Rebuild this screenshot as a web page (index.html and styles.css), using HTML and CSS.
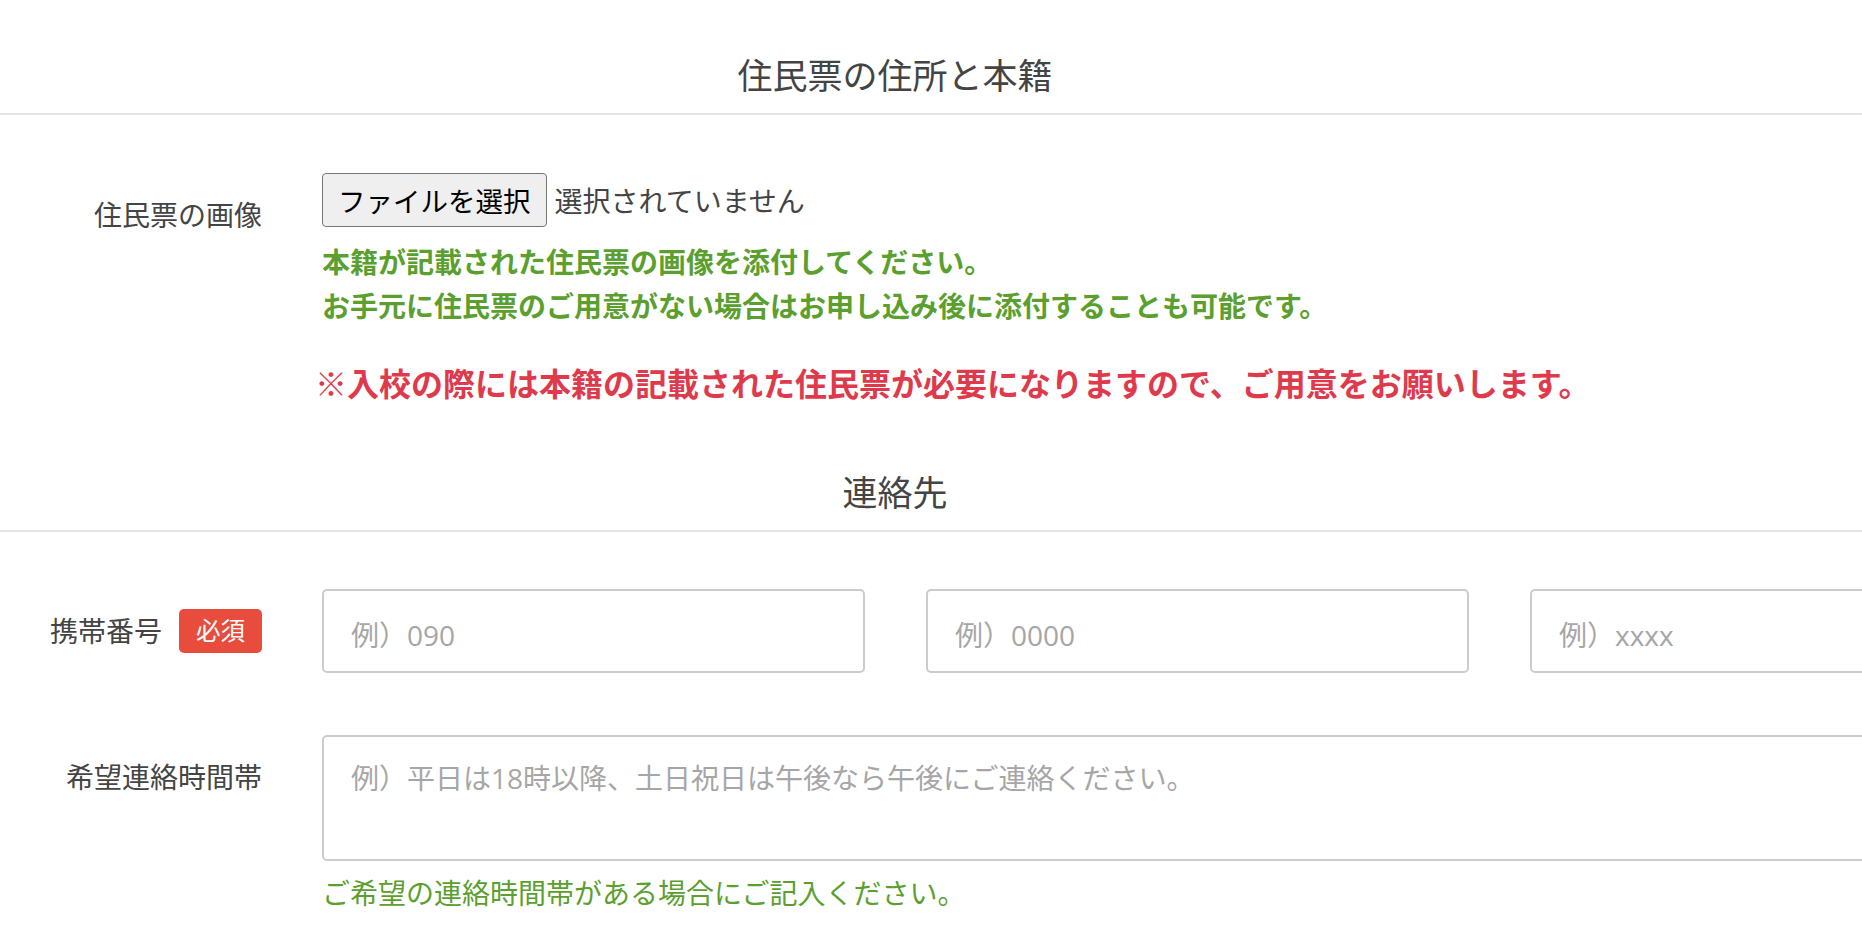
FILE: index.html
```html
<!DOCTYPE html>
<html lang="ja">
<head>
<meta charset="utf-8">
<title>住民票の住所と本籍</title>
<link rel="stylesheet" href="styles.css">
</head>
<body>
<form class="form">
  <h2 class="section-title section-title--first">住民票の住所と本籍</h2>
  <div class="form-row">
    <div class="row-label">住民票の画像</div>
    <div class="row-field">
      <div class="file-line">
        <button type="button" class="file-btn">ファイルを選択</button>
        <span class="file-status">選択されていません</span>
      </div>
      <p class="note-green">本籍が記載された住民票の画像を添付してください。<br>お手元に住民票のご用意がない場合はお申し込み後に添付することも可能です。</p>
      <p class="note-red">※入校の際には本籍の記載された住民票が必要になりますので、ご用意をお願いします。</p>
    </div>
  </div>

  <h2 class="section-title">連絡先</h2>
  <div class="form-row">
    <div class="row-label">携帯番号<span class="badge">必須</span></div>
    <div class="row-field">
      <div class="tel-inputs">
        <input class="text-input" type="text" placeholder="例）090">
        <input class="text-input" type="text" placeholder="例）0000">
        <input class="text-input" type="text" placeholder="例）xxxx">
      </div>
    </div>
  </div>
  <div class="form-row form-row--time">
    <div class="row-label">希望連絡時間帯</div>
    <div class="row-field">
      <textarea class="text-area" placeholder="例）平日は18時以降、土日祝日は午後なら午後にご連絡ください。"></textarea>
      <p class="hint">ご希望の連絡時間帯がある場合にご記入ください。</p>
    </div>
  </div>
</form>
</body>
</html>
```

FILE: styles.css
```css
html, body {
  margin: 0;
  padding: 0;
  background: #fff;
  overflow-x: hidden;
}

body {
  font-family: "Open Sans", "Noto Sans CJK JP", sans-serif;
  color: #444;
  font-size: 28px;
}

.section-title {
  margin: 61px 0 57px;
  padding: 0 72px 11px 0;
  font-size: 35px;
  font-weight: 400;
  line-height: 52px;
  text-align: center;
  color: #444;
  border-bottom: 2px solid #e4e4e4;
}

.section-title--first {
  margin-top: 50px;
  margin-bottom: 58px;
}

.form-row {
  display: grid;
  grid-template-columns: 262px minmax(0, 1fr);
  column-gap: 60px;
}

.form-row--time {
  margin-top: 62px;
}

.row-label {
  display: flex;
  justify-content: flex-end;
  align-items: center;
  padding-top: 20px;
  height: 44px;
  line-height: 44px;
  font-size: 28px;
  color: #444;
  white-space: nowrap;
}

.badge {
  display: inline-block;
  margin-left: 17px;
  height: 44px;
  padding: 0 17px;
  line-height: 44px;
  font-size: 24.5px;
  color: #fff;
  background: #e74c3c;
  border-radius: 5px;
}

.row-field {
  min-width: 0;
}

.file-line {
  display: flex;
  align-items: center;
  gap: 8px;
  height: 54px;
}

.file-btn {
  box-sizing: border-box;
  height: 54px;
  padding: 0 15px;
  font-family: "Open Sans", "Noto Sans CJK JP", sans-serif;
  font-size: 27.5px;
  color: #000;
  background: #efefef;
  border: 1px solid #767676;
  border-radius: 4px;
}

.file-status {
  font-size: 28px;
  color: #444;
  white-space: nowrap;
}

.note-green {
  margin: 13px 0 0;
  font-size: 28px;
  line-height: 44px;
  font-weight: 700;
  color: #5b9f2f;
  white-space: nowrap;
}

.note-red {
  margin: 34px 0 0 -7px;
  font-size: 32px;
  line-height: 44px;
  font-weight: 700;
  color: #df3a4c;
  white-space: nowrap;
}

.tel-inputs {
  display: grid;
  grid-template-columns: repeat(3, 543px);
  column-gap: 61px;
}

.text-input {
  box-sizing: border-box;
  height: 84px;
  padding: 7px 27px 0;
  font-family: "Open Sans", "Noto Sans CJK JP", sans-serif;
  font-size: 28px;
  color: #444;
  background: #fff;
  border: 2px solid #cccccc;
  border-radius: 5px;
  outline: none;
}

.text-area {
  display: block;
  box-sizing: border-box;
  width: 1751px;
  height: 126px;
  padding: 19px 27px;
  font-family: "Open Sans", "Noto Sans CJK JP", sans-serif;
  font-size: 28px;
  line-height: 44px;
  color: #444;
  background: #fff;
  border: 2px solid #cccccc;
  border-radius: 5px;
  resize: none;
  outline: none;
}

.text-input::placeholder,
.text-area::placeholder {
  color: #a6a6a6;
}

.hint {
  margin: 10px 0 0;
  font-size: 28px;
  line-height: 44px;
  color: #5b9f2f;
  white-space: nowrap;
}
```
